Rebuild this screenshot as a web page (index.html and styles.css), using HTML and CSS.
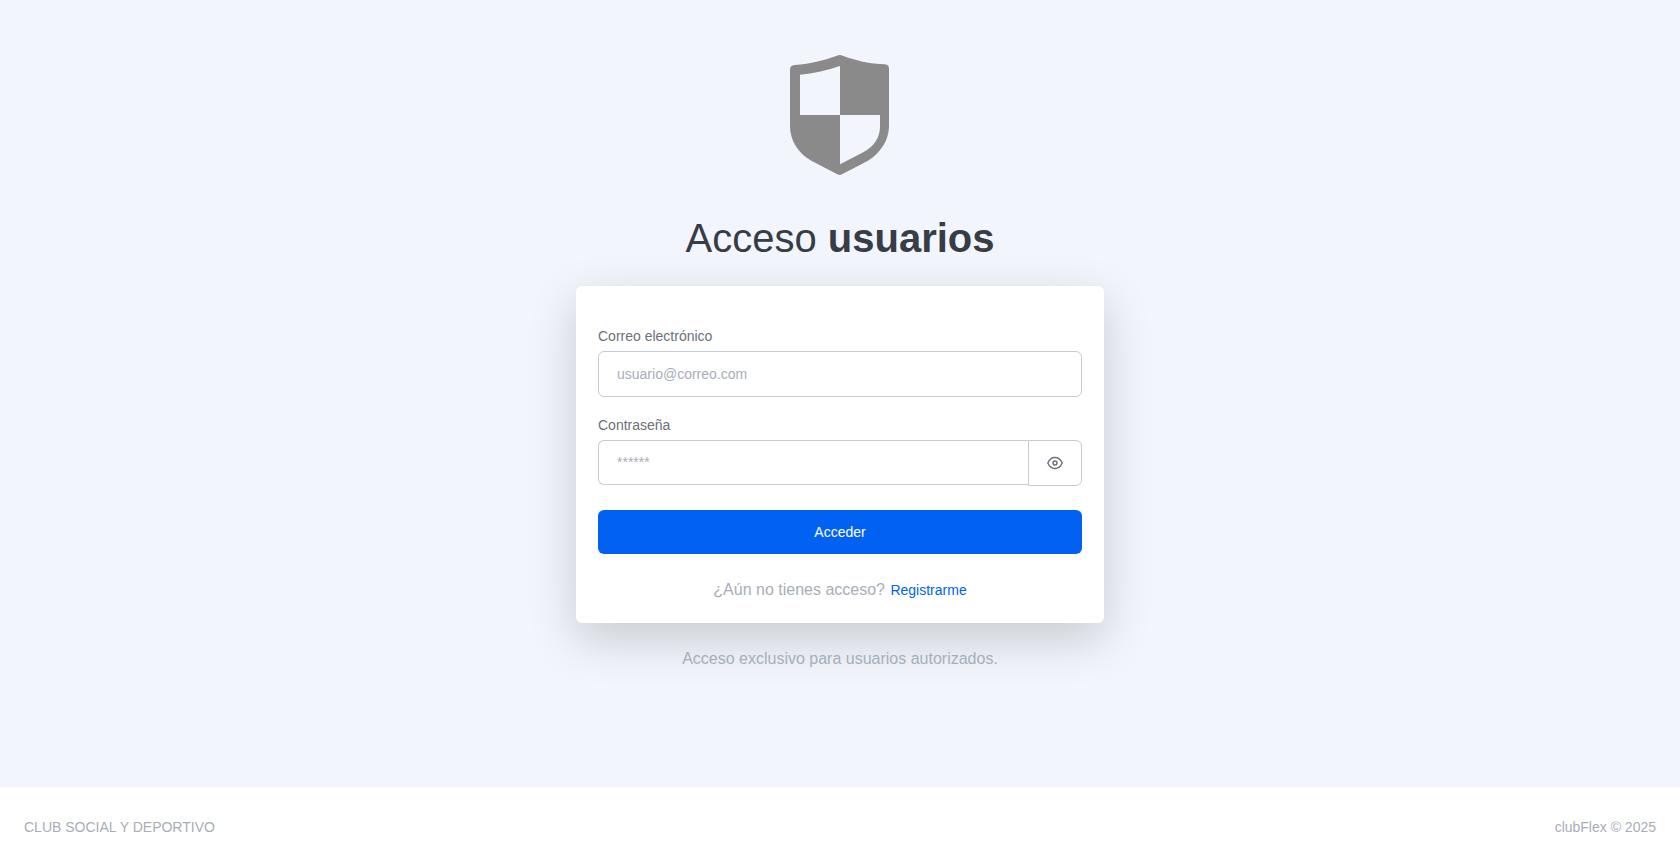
FILE: index.html
```html
<!DOCTYPE html>
<html lang="es">
<head>
    <meta charset="UTF-8">
    <meta name="viewport" content="width=device-width, initial-scale=1.0">
    <title>clubFlex - Acceso usuarios</title>
    <link rel="stylesheet" href="styles.css">
</head>
<body>
    <main class="login">
        <svg class="logo" viewBox="0 0 300 360" aria-hidden="true">
            <path fill="#8a8a8a" fill-rule="evenodd" d="M145 1Q149 -1 154 1C196 17 240 27 285 28Q297 29 297 41V214C297 256 270 296 234 317L156 358Q149 362 142 358L64 317C26 297 0 257 0 214V44Q0 31 14 30C62 27 104 16 145 1ZM150 33C112 46 72 56 30 59V180H150ZM150 180V328L221 291C252 275 270 248 270 214V180Z"/>
        </svg>

        <h1>Acceso <strong>usuarios</strong></h1>

        <form class="card" onsubmit="return false">
            <div class="form-group">
                <label for="email">Correo electrónico</label>
                <input type="email" id="email" class="form-control" placeholder="usuario@correo.com">
            </div>

            <div class="form-group">
                <label for="password">Contraseña</label>
                <div class="input-group">
                    <input type="password" id="password" class="form-control" placeholder="******">
                    <button type="button" class="btn-eye" aria-label="Mostrar contraseña" onclick="togglePassword()">
                        <svg viewBox="0 0 16 14" aria-hidden="true">
                            <path d="M.8 7C2.500 3.200 4.800 1.500 8 1.500S13.500 3.200 15.200 7C13.500 10.800 11.200 12.500 8 12.500S2.500 10.800.8 7Z"/>
                            <circle cx="8" cy="7" r="2"/>
                        </svg>
                    </button>
                </div>
            </div>

            <button type="submit" class="btn-primary">Acceder</button>

            <p class="register">¿Aún no tienes acceso? <a href="#">Registrarme</a></p>
        </form>

        <p class="notice">Acceso exclusivo para usuarios autorizados.</p>
    </main>

    <footer class="footer">
        <span>CLUB SOCIAL Y DEPORTIVO</span>
        <span>clubFlex © 2025</span>
    </footer>

    <script>
        function togglePassword() {
            const input = document.getElementById("password");
            input.type = input.type === "password" ? "text" : "password";
        }
    </script>
</body>
</html>
```

FILE: styles.css
```css
* {
    margin: 0;
    padding: 0;
    box-sizing: border-box;
}

body {
    display: flex;
    flex-direction: column;
    min-height: 100vh;
    background: #f2f6fc;
    color: #a7aeb8;
    font-family: "Liberation Sans", Arial, sans-serif;
    font-size: 16px;
    line-height: 24px;
}

.login {
    flex: 1;
    display: flex;
    flex-direction: column;
    align-items: center;
    padding: 55px 16px 24px;
}

.logo {
    width: 100px;
    height: 120px;
    margin-bottom: 39px;
}

h1 {
    margin-bottom: 24px;
    color: #363d47;
    font-size: 40px;
    font-weight: 400;
    line-height: 48px;
    text-align: center;
}

.card {
    width: 100%;
    max-width: 528px;
    padding: 40px 22px 21px;
    background: #fff;
    border-radius: 6px;
    box-shadow: 0 16px 48px rgba(0, 0, 0, 0.175);
}

.form-group {
    margin-bottom: 18px;
}

label {
    display: block;
    margin-bottom: 4px;
    color: #69707a;
    font-size: 14px;
    line-height: 21px;
}

.form-control {
    display: block;
    width: 100%;
    height: 46px;
    padding: 0 18px;
    background: #fff;
    border: 1px solid #c5ccd6;
    border-radius: 6px;
    color: #69707a;
    font-family: inherit;
    font-size: 14px;
}

.form-control::placeholder {
    color: #a7aeb8;
}

.form-control:focus {
    outline: none;
    border-color: #0061f2;
}

.input-group {
    display: flex;
    align-items: flex-start;
}

.input-group .form-control {
    flex: 1;
    height: 45px;
    padding-bottom: 2px;
    border-right: 0;
    border-radius: 6px 0 0 6px;
}

.btn-eye {
    display: flex;
    align-items: center;
    justify-content: center;
    width: 54px;
    height: 46px;
    background: #fff;
    border: 1px solid #c5ccd6;
    border-radius: 0 6px 6px 0;
    cursor: pointer;
}

.btn-eye svg {
    width: 16px;
    height: 14px;
    fill: none;
    stroke: #69707a;
    stroke-width: 1.4;
}

.btn-primary {
    display: block;
    width: 100%;
    height: 44px;
    margin-top: 24px;
    background: #0061f2;
    border: 0;
    border-radius: 6px;
    color: #fff;
    font-family: inherit;
    font-size: 14px;
    cursor: pointer;
}

.register {
    margin-top: 24px;
    text-align: center;
}

.register a {
    margin-left: 1px;
    color: #0061f2;
    font-size: 14px;
    text-decoration: none;
}

.notice {
    margin-top: 24px;
    text-align: center;
}

.footer {
    display: flex;
    align-items: center;
    justify-content: space-between;
    min-height: 80px;
    padding: 0 24px;
    background: #fff;
    font-size: 14px;
}
```
